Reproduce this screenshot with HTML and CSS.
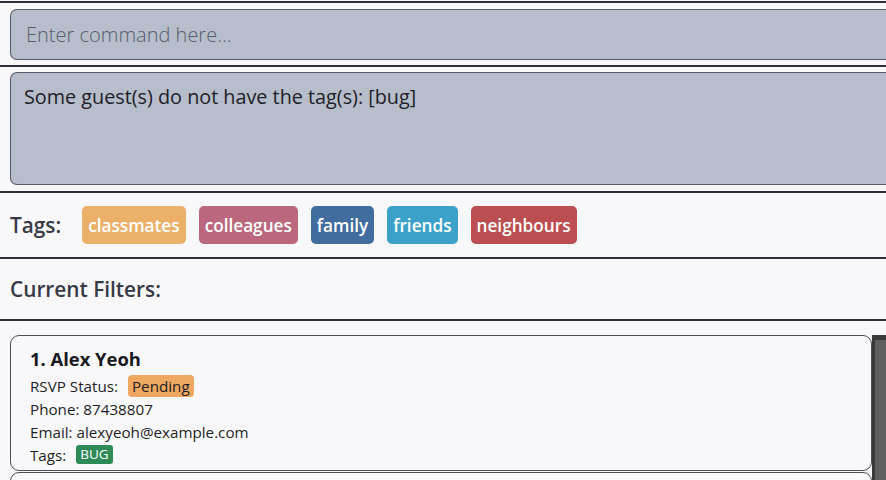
FILE: index.html
```html
<!DOCTYPE html>
<html>
<head>
<meta charset="utf-8">
<link rel="stylesheet" href="styles.css">
</head>
<body>
<div class="app">
  <section class="sec sec-cmd">
    <div class="cmd-box">Enter command here...</div>
  </section>
  <section class="sec sec-result">
    <div class="result-box">Some guest(s) do not have the tag(s): [bug]</div>
  </section>
  <section class="sec sec-tags">
    <span class="label">Tags:</span>
    <div class="chips">
      <span class="chip c-classmates">classmates</span>
      <span class="chip c-colleagues">colleagues</span>
      <span class="chip c-family">family</span>
      <span class="chip c-friends">friends</span>
      <span class="chip c-neighbours">neighbours</span>
    </div>
  </section>
  <section class="sec sec-filters">
    <span class="label">Current Filters:</span>
  </section>
  <section class="list">
    <div class="cards">
      <div class="card">
        <div class="name">1. Alex Yeoh</div>
        <div class="row">RSVP Status: <span class="pending">Pending</span></div>
        <div class="row">Phone: 87438807</div>
        <div class="row">Email: alexyeoh@example.com</div>
        <div class="row">Tags: <span class="bug">BUG</span></div>
      </div>
      <div class="card card-next"></div>
    </div>
    <div class="scrollbar"><div class="thumb"></div></div>
  </section>
</div>
</body>
</html>
```

FILE: styles.css
```css
html, body {
  margin: 0;
  padding: 0;
  background: #f8f8fa;
  font-family: "Open Sans", "Noto Sans", sans-serif;
  overflow: hidden;
}
.app {
  width: 886px;
  height: 480px;
  display: flex;
  flex-direction: column;
  padding-top: 1px;
  box-sizing: border-box;
}
.sec {
  border-top: 2px solid #2c2f38;
}
.sec-cmd {
  padding: 6px 0 5px 10px;
}
.cmd-box {
  height: 49px;
  background: #b7bdca;
  border: 1px solid #565b68;
  border-right: none;
  border-radius: 7px 0 0 7px;
  box-sizing: content-box;
  padding-left: 15px;
  display: flex;
  align-items: center;
  font-size: 20px;
  color: #575e6e;
  font-weight: 300;
}
.sec-result {
  padding: 5px 0 6px 10px;
}
.result-box {
  background: #b7bdca;
  border: 1px solid #565b68;
  border-right: none;
  border-radius: 7px 0 0 7px;
  padding: 10px 0 0 13px;
  box-sizing: border-box;
  height: 113px;
  font-size: 19.8px;
  color: #1e2028;
}
.sec-tags {
  height: 66px;
  box-sizing: border-box;
  display: flex;
  align-items: center;
  padding-left: 10px;
  gap: 21px;
}
.label {
  font-size: 20.8px;
  font-weight: 600;
  color: #373a46;
}
.chips {
  display: flex;
  gap: 13px;
}
.chip {
  height: 38px;
  padding: 0 6px;
  border-radius: 5px;
  color: #fff;
  font-size: 17.2px;
  font-weight: 600;
  display: flex;
  align-items: center;
}
.c-classmates { background: #ebb06a; }
.c-colleagues { background: #bb687e; }
.c-family { background: #416d9e; }
.c-friends { background: #3ca1c8; }
.c-neighbours { background: #bb4e50; }
.sec-filters {
  height: 62px;
  box-sizing: border-box;
  display: flex;
  align-items: center;
  padding-left: 10px;
}
.list {
  flex: 1;
  border-top: 2px solid #2c2f38;
  padding-top: 14px;
  display: flex;
  min-height: 0;
}
.cards {
  flex: 1;
  padding-left: 10px;
  display: flex;
  flex-direction: column;
  gap: 1px;
}
.card {
  border: 1.5px solid #4b4d57;
  border-radius: 9px;
  padding: 10px 19px 6px;
  height: 136px;
  box-sizing: border-box;
  color: #1e1e24;
  font-size: 15.2px;
}
.name {
  font-size: 18.4px;
  font-weight: 700;
  margin-bottom: 4px;
  color: #18181e;
}
.row {
  height: 22.8px;
  display: flex;
  align-items: center;
  gap: 10px;
}
.pending {
  background: #eea862;
  border-radius: 4px;
  padding: 1px 4px;
  color: #1e1e24;
}
.bug {
  background: #2e8b57;
  color: #fff;
  border-radius: 3px;
  font-size: 13.5px;
  padding: 0 4px;
  line-height: 19px;
}
.card-next {
  height: 20px;
}
.scrollbar {
  width: 14px;
  background: #3a3a3a;
  padding: 5px 0 0 3px;
  box-sizing: border-box;
}
.thumb {
  height: 100%;
  background: #5f5f5f;
}
```
